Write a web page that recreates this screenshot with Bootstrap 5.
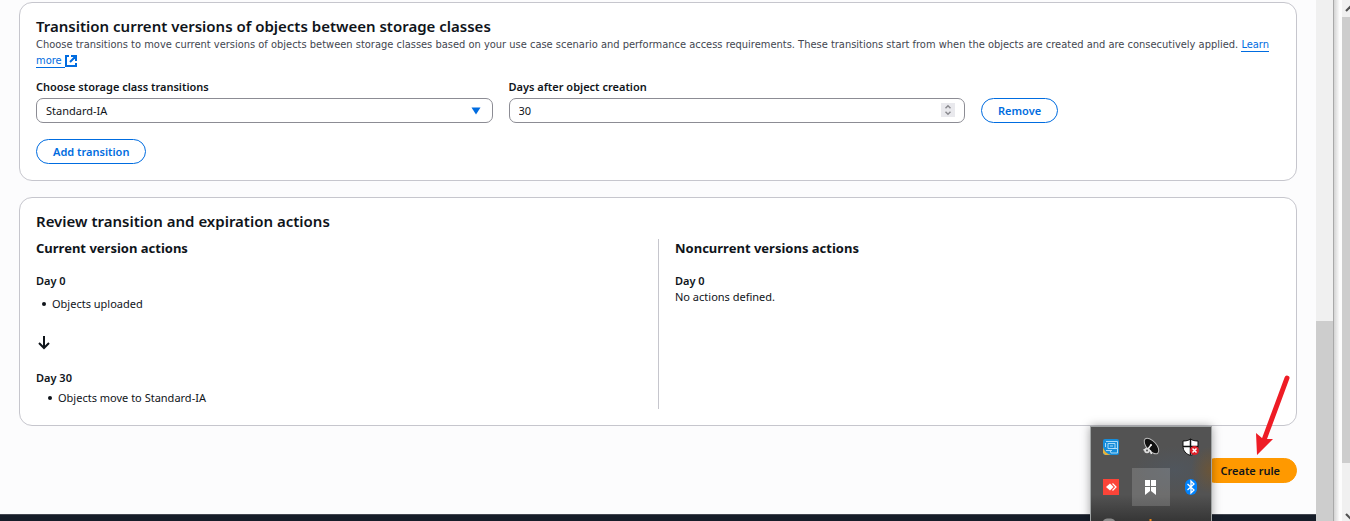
<!DOCTYPE html>
<html lang="en">
<head>
<meta charset="utf-8">
<meta name="viewport" content="width=device-width, initial-scale=1">
<title>Create lifecycle rule</title>
<link href="https://cdn.jsdelivr.net/npm/bootstrap@5.3.0/dist/css/bootstrap.min.css" rel="stylesheet">
<style>
  body { font-family: "Noto Sans", "Open Sans", sans-serif; font-size: 11px; line-height: 16px; color: #0f141a; background: #fcfcfd; }
  .app { height: 100vh; }
  .content { padding: 2px 19px 0; }
  .panel { border: 1px solid #c6c6cd; border-radius: 13px; background: #fff; padding: 14px 16px 16px; }
  h2 { font-size: 15px; line-height: 18px; font-weight: 600; margin: 0; }
  h3 { font-size: 13px; line-height: 18px; font-weight: 700; margin: 0; }
  h4, .field-label { font-size: 11px; line-height: 16px; font-weight: 600; margin: 0; }
  .desc { font-family: "DejaVu Sans Condensed", "Noto Sans", sans-serif; color: #424650; margin: 2px 0 10px; }
  .desc a { color: #006ce0; text-decoration: none; border-bottom: 1px solid #006ce0; }
  .fields { display: grid; grid-template-columns: 113fr 113fr 74fr; gap: 16px; align-items: end; }
  .field-label { display: block; margin-bottom: 3px; }
  .field { height: 25px; border: 1px solid #8c8c94; border-radius: 7px; font-size: 11px; line-height: 16px; padding: 3px 9px; color: #0f141a; background-color: #fff; }
  select.field { background-image: url("data:image/svg+xml,%3Csvg xmlns='http://www.w3.org/2000/svg' viewBox='0 0 10 8'%3E%3Cpath d='M.5 .5h9L5 7.5z' fill='%23006ce0'/%3E%3C/svg%3E"); background-size: 10px 8px; background-position: right 11px center; }
  input.field { appearance: textfield; -moz-appearance: textfield; }
  input.field::-webkit-inner-spin-button { display: none; }
  .spinner { right: 10px; top: 5px; }
  .pill { border: 1px solid #006ce0; border-radius: 13px; height: 25px; padding: 0 16px; font-size: 11px; line-height: 16px; font-weight: 600; color: #006ce0; background: #fff; }
  .pill-main { border-color: #ff9900; background: #ff9900; color: #0f141a; }
  .versions { margin-top: 9px; }
  .versions > div { width: 50%; padding-bottom: 3px; }
  .versions > div + div { border-left: 1px solid #c6c6cd; padding-left: 16px; }
  .steps { list-style: none; margin: 7px 0 0; padding-left: 6px; }
  .steps li { display: flex; align-items: center; gap: 6px; }
  .steps li::before { content: ""; width: 4px; height: 4px; border-radius: 50%; background: #0f141a; }
  .steps-deep { margin-top: 4px; padding-left: 12px; }
  .step-arrow { margin: 24px 0 20px; }
  .bar { width: 17px; background: #f0f0f0; }
  .bar-top { height: 321px; }
  .bar-thumb { background: #cdcdcd; }
  .edge { width: 9px; border-left: 1px solid #a9a9a9; background: linear-gradient(90deg, #d4d4d4, #fcfcfc 70%); }
  .bar-outer { width: 8px; }
  .page-foot { height: 7px; background: #161d29; border-top: 1px solid #424650; }
  .tray { right: 138px; bottom: 0; width: 122px; height: 95px; border: 1px solid #a0a4a4; border-bottom: 0; background: radial-gradient(ellipse 20px 24px at 120px 43px, #6b5538, transparent), radial-gradient(ellipse 42px 24px at 84px 43px, #50565d, transparent), linear-gradient(#535353 72%, #363636); box-shadow: 0 0 9px rgba(0,0,0,.35); }
  .tray svg { display: block; }
  .pointer { right: 59px; top: 374px; }
</style>
</head>
<body>
<div class="app d-flex overflow-hidden position-relative">
  <main class="flex-grow-1 d-flex flex-column">
    <div class="content d-flex flex-column gap-3 flex-grow-1">
      <section class="panel">
        <h2>Transition current versions of objects between storage classes</h2>
        <p class="desc">Choose transitions to move current versions of objects between storage classes based on your use case scenario and performance access requirements. These transitions start from when the objects are created and are consecutively applied. <a href="#">Learn more </a>
          <svg width="12" height="12" viewBox="0 0 12 12" fill="none" stroke="#006ce0" stroke-width="2" aria-hidden="true"><path d="M4 1H1v10h10V8M6 1h5v5M11 1 5 7"/></svg></p>
        <div class="fields">
          <div>
            <label class="field-label" for="storageClass">Choose storage class transitions</label>
            <select class="form-select field" id="storageClass"><option>Standard-IA</option></select>
          </div>
          <div>
            <label class="field-label" for="days">Days after object creation</label>
            <div class="position-relative">
              <input class="form-control field" id="days" type="number" value="30">
              <svg class="spinner position-absolute" width="14" height="14" viewBox="0 0 14 14" fill="none" aria-hidden="true"><path fill="#e9e9ed" d="M0 0h14v14H0z"/><path stroke="#8b8b90" stroke-width="1.4" d="m4.500 5.300 2.500-2.600 2.500 2.600M4.500 8.700 7 11.300l2.500-2.600"/></svg>
            </div>
          </div>
          <div><button class="pill" type="button">Remove</button></div>
        </div>
        <button class="pill mt-3 d-block" type="button">Add transition</button>
      </section>

      <section class="panel">
        <h2>Review transition and expiration actions</h2>
        <div class="versions d-flex">
          <div>
            <h3>Current version actions</h3>
            <h4 class="mt-3">Day 0</h4>
            <ul class="steps"><li>Objects uploaded</li></ul>
            <svg class="step-arrow d-block" width="16" height="14" viewBox="0 0 16 14" fill="none" stroke="#0f141a" stroke-width="2" aria-hidden="true"><path d="M8 0v12M3 7l5 5 5-5"/></svg>
            <h4>Day 30</h4>
            <ul class="steps steps-deep"><li>Objects move to Standard-IA</li></ul>
          </div>
          <div>
            <h3>Noncurrent versions actions</h3>
            <h4 class="mt-3">Day 0</h4>
            <p class="m-0">No actions defined.</p>
          </div>
        </div>
      </section>

      <div class="d-flex justify-content-end mt-3"><button class="pill pill-main" type="button">Create rule</button></div>
    </div>
    <footer class="page-foot"></footer>
  </main>

  <div class="bar flex-shrink-0 d-flex flex-column"><div class="bar-top"></div><div class="bar-thumb flex-grow-1"></div></div>
  <div class="edge flex-shrink-0"></div>
  <div class="bar bar-outer flex-shrink-0 d-flex flex-column">
    <svg width="8" height="17" viewBox="0 0 8 17" fill="none" stroke="#505050" stroke-width="2.200" aria-hidden="true"><path d="m4 11 5-5"/></svg>
    <div class="bar-thumb flex-grow-1"></div>
    <svg width="8" height="58" viewBox="0 0 8 58" fill="none" stroke="#505050" stroke-width="2.200" aria-hidden="true"><path d="m4 51 5 5"/></svg>
  </div>

  <aside class="tray position-absolute" aria-label="Notification area">
    <svg width="119" height="94" viewBox="1091 427 119 94" aria-hidden="true">
      <path fill="#fff" fill-opacity=".16" d="M1132 468h38v38h-38z"/>
      <!-- graphics utility -->
      <rect x="1103" y="439" width="16" height="16" rx="2" fill="#168ddb"/>
      <path fill="#e7b13a" d="M1103 447c1 4 4 7 8 8h-6l-2-2z"/>
      <path fill="none" stroke="#b9e3fb" stroke-width=".9" d="M1106 441.500h11.500v7M1105.500 447v-4M1108 443.500h7v5h-7zM1106 450.500h6M1110 450.500l1 2.500h6.500v-4.500h-5M1110 446h3"/>
      <!-- satellite dish -->
      <ellipse cx="1151.500" cy="446" rx="9.500" ry="4.800" transform="rotate(48 1151.500 446)" fill="#111" stroke="#bdbdbd"/>
      <path fill="none" stroke="#eee" stroke-width="1.500" d="m1151 445-3 4M1143.500 450l4-1 3 2 1 3"/>
      <circle cx="1147" cy="450.500" r="2.800" fill="#ddd"/><circle cx="1147" cy="450.500" r="1" fill="#555"/><circle cx="1151" cy="445" r="1" fill="#fff"/>
      <!-- security shield -->
      <path fill="#fff" stroke="#111" d="M1190.500 439c2 1.500 4.500 2 7.500 2v5c0 5-3 8-7.500 9.500-4.500-1.500-7.500-4.500-7.500-9.500v-5c3 0 5.500-.5 7.500-2z"/>
      <path stroke="#111" stroke-width="1.500" d="M1190.500 439v16M1183 446.500h15"/>
      <circle cx="1194.500" cy="450.500" r="4.500" fill="#df2029"/><path stroke="#fff" stroke-width="1.500" d="m1192.500 448.500 4 4m0-4-4 4"/>
      <!-- remote desktop -->
      <path fill="#fb4438" d="M1103 479h16v16h-16z"/><path fill="#fff" d="m1110 483.500 3.500 3.500-3.500 3.500-4-3.500z"/><path fill="none" stroke="#fff" stroke-width="1.200" d="m1112.500 483.500 3.500 3.500-3.500 3.500"/>
      <!-- bookmark -->
      <path fill="#fff" d="M1145 480h5v6h-5zM1151 480h5v6h-5zM1145 487h5v4l-5 4zM1151 487h5v8l-5-4z"/>
      <!-- bluetooth -->
      <rect x="1185" y="479" width="12" height="16" rx="6" fill="#0082fc"/><path fill="none" stroke="#fff" stroke-width="1.300" d="m1187.500 484 6.500 6-3 3v-12l3 3-6.500 6"/>
      <path fill="#8d8d8d" d="M1103 521c1-2 3-2.500 6-2.500s5 .5 6 2.500z"/><path fill="#f28a16" d="M1149.500 519h2v2h-2z"/>
    </svg>
  </aside>

  <svg class="pointer position-absolute" width="36" height="84" viewBox="1255 374 36 84" aria-hidden="true"><path d="M1287 378 1264 440" stroke="#ee1c25" stroke-width="5" stroke-linecap="round"/><path fill="#ee1c25" d="m1257 455-1-22 6 5 4 1 7 0z"/></svg>
</div>
<script src="https://cdn.jsdelivr.net/npm/bootstrap@5.3.0/dist/js/bootstrap.bundle.min.js"></script>
</body>
</html>
